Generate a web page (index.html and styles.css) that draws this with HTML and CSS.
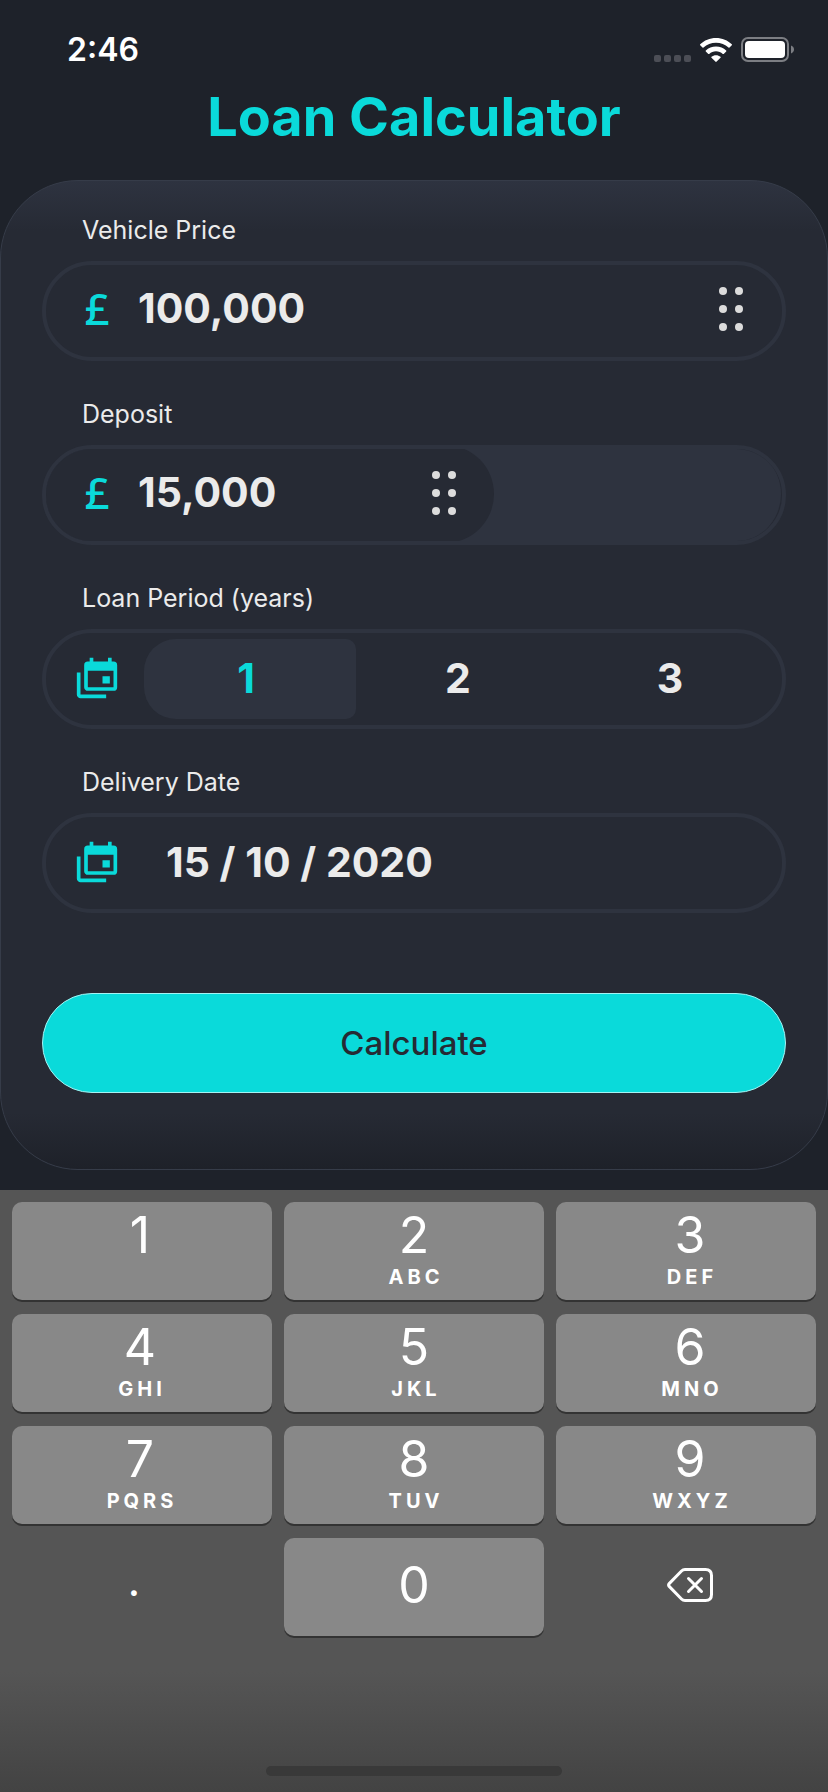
FILE: index.html
```
<!DOCTYPE html>
<html lang="en">
<head>
<meta charset="utf-8">
<meta name="viewport" content="width=device-width, initial-scale=1">
<title>Loan Calculator</title>
<link rel="stylesheet" href="styles.css">
</head>
<body>
<svg class="sprite" aria-hidden="true">
  <symbol id="calendars" viewBox="0 0 24 24">
    <path d="M21,17V8H7V17H21M21,3A2,2 0 0,1 23,5V17A2,2 0 0,1 21,19H7C5.89,19 5,18.1 5,17V5A2,2 0 0,1 7,3H8V1H10V3H18V1H20V3H21M3,21H17V23H3C1.89,23 1,22.1 1,21V9H3V21M19,15H15V11H19V15Z"/>
  </symbol>
  <symbol id="grip" viewBox="0 0 24 44">
    <circle cx="4" cy="4" r="4"/><circle cx="20" cy="4" r="4"/>
    <circle cx="4" cy="22" r="4"/><circle cx="20" cy="22" r="4"/>
    <circle cx="4" cy="40" r="4"/><circle cx="20" cy="40" r="4"/>
  </symbol>
</svg>
<header class="status">
  <time class="clock">2:46</time>
  <div class="indicators">
    <svg class="signal" width="37" height="7" viewBox="0 0 37 7" aria-hidden="true"><rect width="7" height="7" rx="2"/><rect x="10" width="7" height="7" rx="2"/><rect x="20" width="7" height="7" rx="2"/><rect x="30" width="7" height="7" rx="2"/></svg>
    <svg class="wifi" width="32" height="24" viewBox="0 0 32 24" aria-hidden="true">
      <path d="M16 0C22.200 0 27.800 2.400 31.800 6.300Q32.200 6.800 31.800 7.200L29.500 9.500Q29 10 28.500 9.500C25.200 6.400 20.800 4.700 16 4.700S6.800 6.400 3.500 9.500Q3 10 2.500 9.500L.2 7.200Q-.2 6.800.2 6.300C4.200 2.400 9.800 0 16 0Z"/>
      <path d="M16 8.600C20 8.600 23.500 10.100 26.200 12.600Q26.600 13 26.200 13.500L23.700 15.900Q23.200 16.300 22.800 15.900C20.900 14.300 18.600 13.300 16 13.300S11.100 14.300 9.200 15.900Q8.800 16.300 8.300 15.900L5.800 13.500Q5.400 13 5.800 12.600C8.500 10.100 12 8.600 16 8.600Z"/>
      <path d="M16 17.200C17.800 17.200 19.300 17.800 20.500 18.800Q21 19.200 20.500 19.700L16.400 23.800Q16 24.100 15.600 23.800L11.500 19.700Q11 19.200 11.500 18.800C12.700 17.800 14.200 17.200 16 17.200Z"/>
    </svg>
    <svg class="battery" width="54" height="25" viewBox="0 0 54 25" aria-hidden="true"><rect class="shell" x="1" y="1" width="46" height="23" rx="6"/><rect x="4" y="4" width="40" height="17" rx="4"/><path class="tip" d="M50 8.500C52 9.300 53 10.700 53 12.500S52 15.700 50 16.500Z"/></svg>
  </div>
</header>
<main>
  <h1 class="title">Loan Calculator</h1>
  <form class="card">
    <div class="group">
      <label class="caption" for="price">Vehicle Price</label>
      <div class="field">
        <div class="amount">
          <span class="lead">£</span>
          <input class="value" id="price" type="text" inputmode="decimal" value="100,000">
          <button class="handle" type="button" aria-label="Adjust vehicle price"><svg width="24" height="44"><use href="#grip"/></svg></button>
        </div>
      </div>
    </div>
    <div class="group">
      <label class="caption" for="deposit">Deposit</label>
      <div class="field">
        <div class="track">
          <div class="amount partial">
            <span class="lead">£</span>
            <input class="value" id="deposit" type="text" inputmode="decimal" value="15,000">
            <button class="handle" type="button" aria-label="Adjust deposit"><svg width="24" height="44"><use href="#grip"/></svg></button>
          </div>
        </div>
      </div>
    </div>
    <div class="group" role="radiogroup" aria-labelledby="period">
      <span class="caption" id="period">Loan Period (years)</span>
      <div class="field">
        <svg class="lead" width="44" height="44" aria-hidden="true"><use href="#calendars"/></svg>
        <div class="years">
          <label class="year"><input type="radio" name="years" value="1" checked><span>1</span></label>
          <label class="year"><input type="radio" name="years" value="2"><span>2</span></label>
          <label class="year"><input type="radio" name="years" value="3"><span>3</span></label>
        </div>
      </div>
    </div>
    <div class="group">
      <label class="caption" for="date">Delivery Date</label>
      <div class="field">
        <svg class="lead" width="44" height="44" aria-hidden="true"><use href="#calendars"/></svg>
        <input class="value date" id="date" type="text" value="15 / 10 / 2020">
      </div>
    </div>
    <button class="submit" type="button">Calculate</button>
  </form>
</main>
<section class="keyboard" aria-label="Keypad">
  <div class="keys">
    <button class="key" type="button"><b>1</b><small></small></button>
    <button class="key" type="button"><b>2</b><small>ABC</small></button>
    <button class="key" type="button"><b>3</b><small>DEF</small></button>
    <button class="key" type="button"><b>4</b><small>GHI</small></button>
    <button class="key" type="button"><b>5</b><small>JKL</small></button>
    <button class="key" type="button"><b>6</b><small>MNO</small></button>
    <button class="key" type="button"><b>7</b><small>PQRS</small></button>
    <button class="key" type="button"><b>8</b><small>TUV</small></button>
    <button class="key" type="button"><b>9</b><small>WXYZ</small></button>
    <button class="key single plain point" type="button">.</button>
    <button class="key single" type="button"><b>0</b></button>
    <button class="key single plain" type="button" aria-label="Delete">
      <svg class="erase" width="46" height="34" viewBox="0 0 46 34" aria-hidden="true"><path d="M18 1.500H38.500Q44.500 1.500 44.500 7.500V26.500Q44.500 32.500 38.500 32.500H18Q16 32.500 14.500 31L2.200 18.400Q1 17 2.200 15.600L14.500 3Q16 1.500 18 1.500Z"/><path d="M21.500 10.500L34.500 23.500M34.500 10.500L21.500 23.500"/></svg>
    </button>
  </div>
  <div class="home"></div>
</section>
</body>
</html>
```
FILE: styles.css
```
:root {
  --page: #1e222a;
  --panel: #262a34;
  --line: #2e333f;
  --accent: #0adada;
  --text: #ebebeb;
}
* { box-sizing: border-box; }
body {
  margin: 0;
  min-height: 100vh;
  display: flex;
  flex-direction: column;
  background: var(--page);
  color: var(--text);
  font-family: Inter, "Liberation Sans", sans-serif;
}
button, input {
  margin: 0;
  padding: 0;
  border: 0;
  background: none;
  color: inherit;
  font: inherit;
}
.sprite { position: absolute; width: 0; height: 0; }
svg { display: block; fill: currentColor; }

.status {
  display: flex;
  justify-content: space-between;
  align-items: center;
  height: 84px;
  padding: 15px 33px 0 67px;
  color: #fff;
}
.clock { font-size: 32px; line-height: 40px; font-weight: 600; }
.indicators { display: flex; align-items: flex-end; gap: 9px; }
.signal { color: #4c4e56; }
.shell { fill: none; stroke: #7c7e83; stroke-width: 2; }
.tip { fill: #7c7e83; }

.title {
  margin: 0;
  padding: 1px 0 31px;
  color: var(--accent);
  font-size: 54px;
  line-height: 64px;
  font-weight: 700;
  text-align: center;
}

.card {
  padding: 33px 41px 76px;
  border: 1px solid #363c49;
  border-radius: 78px;
  background:
    linear-gradient(#2e3340, #262a3400) top / 100% 50px no-repeat,
    linear-gradient(#1e212900, #1e2129) bottom / 100% 56px no-repeat,
    var(--panel);
}
.group { margin-bottom: 37px; }
.caption {
  display: block;
  padding: 0 0 15px 40px;
  font-size: 25px;
  line-height: 32px;
}
.field {
  display: flex;
  align-items: center;
  height: 100px;
  border: 4px solid var(--line);
  border-radius: 50px;
  overflow: hidden;
}
.amount {
  flex: 1;
  min-width: 0;
  display: flex;
  align-items: center;
  height: 98px;
  padding: 0 39px 4px 0;
}
.track {
  flex: 1;
  min-width: 0;
  height: 98px;
  margin: -4px 1px -2px 0;
  border-radius: 0 49px 49px 0;
  background: var(--line);
}
.partial {
  width: 61%;
  padding: 0 38px 2px 0;
  border-radius: 0 49px 49px 0;
  background: var(--panel);
}
.lead {
  flex: none;
  width: 44px;
  margin: 0 0 2px 29px;
  color: var(--accent);
}
span.lead {
  font-family: "Noto Sans", sans-serif;
  font-size: 44px;
  line-height: 60px;
  font-weight: 500;
  text-align: center;
}
.value {
  flex: 1;
  min-width: 0;
  height: 60px;
  margin-left: 19px;
  padding-bottom: 2px;
  font-size: 41px;
  font-weight: 700;
}
.date { margin-left: 47px; }
.handle { color: #dcdcdc; }

.years {
  flex: 1;
  display: grid;
  grid-template-columns: repeat(3, 1fr);
  margin: 0 2px 0 25px;
}
.year {
  display: flex;
  align-items: center;
  justify-content: center;
  height: 80px;
  padding: 0 8px 2px 0;
  border-radius: 10px;
  font-size: 41px;
  font-weight: 700;
}
.year:first-child { border-radius: 32px 10px 10px 32px; }
.year input { position: absolute; opacity: 0; }
.year:has(input:checked) { background: var(--line); color: var(--accent); }

.submit {
  display: block;
  width: 100%;
  height: 100px;
  margin-top: 80px;
  border: 1px solid #a4f3f3;
  border-radius: 50px;
  background: var(--accent);
  color: var(--panel);
  font-size: 33px;
  font-weight: 500;
}

.keyboard {
  flex: 1;
  display: flex;
  flex-direction: column;
  justify-content: space-between;
  margin-top: 20px;
  padding: 12px 12px 16px;
  background: linear-gradient(#555 80%, #434343);
  color: #fff;
}
.keys {
  display: grid;
  grid-template-columns: repeat(3, 1fr);
  gap: 14px 12px;
}
.key {
  display: flex;
  flex-direction: column;
  align-items: center;
  justify-content: center;
  height: 98px;
  padding-bottom: 8px;
  border-radius: 10px;
  background: #888;
  box-shadow: 0 2px #333;
}
.key:nth-child(3n + 1) { padding-right: 4px; }
.key:nth-child(3n) { padding-left: 8px; }
.key b { font-size: 50px; line-height: 60px; font-weight: 400; }
.key small {
  height: 24px;
  padding-left: 4px;
  font-size: 20px;
  line-height: 24px;
  font-weight: 700;
  letter-spacing: 4px;
}
.key.single { padding-bottom: 4px; }
.key.plain { background: none; box-shadow: none; }
.key.point { padding: 0 16px 18px 0; font-family: Lato, sans-serif; font-size: 46px; }
.erase { fill: none; stroke: currentColor; stroke-width: 3; stroke-linecap: round; stroke-linejoin: round; }
.home {
  align-self: center;
  width: 296px;
  height: 10px;
  border-radius: 5px;
  background: #393939;
}
```
